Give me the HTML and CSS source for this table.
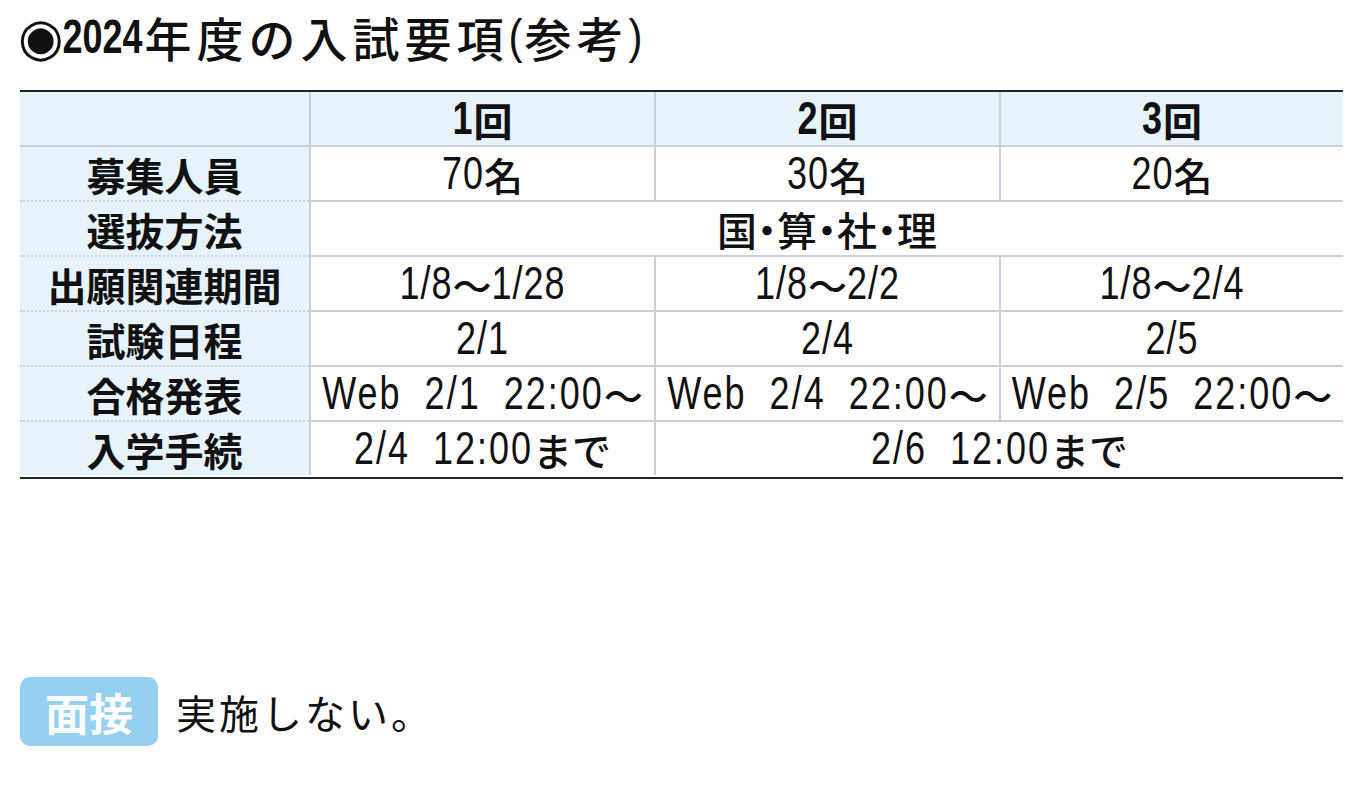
FILE: index.html
```html
<!DOCTYPE html>
<html lang="ja">
<head>
<meta charset="utf-8">
<title>2024年度の入試要項</title>
<link rel="stylesheet" href="styles.css">
</head>
<body>
<h1 class="title"><span class="mark">◉</span><span class="n">2024</span>年度の入試要項<span class="p">(</span>参考<span class="p">)</span></h1>

<div class="grid">
  <div class="cell lab head"></div>
  <div class="cell head dat"><span class="n">1</span><span class="j">回</span></div>
  <div class="cell head dat"><span class="n">2</span><span class="j">回</span></div>
  <div class="cell head dat"><span class="n">3</span><span class="j">回</span></div>

  <div class="cell lab">募集人員</div>
  <div class="cell dat"><span class="n">70</span><span class="j">名</span></div>
  <div class="cell dat"><span class="n">30</span><span class="j">名</span></div>
  <div class="cell dat"><span class="n">20</span><span class="j">名</span></div>

  <div class="cell lab">選抜方法</div>
  <div class="cell dat span3"><span class="subj">国・算・社・理</span></div>

  <div class="cell lab">出願関連期間</div>
  <div class="cell dat"><span class="n">1/8</span><span class="j">〜</span><span class="n">1/28</span></div>
  <div class="cell dat"><span class="n">1/8</span><span class="j">〜</span><span class="n">2/2</span></div>
  <div class="cell dat"><span class="n">1/8</span><span class="j">〜</span><span class="n">2/4</span></div>

  <div class="cell lab">試験日程</div>
  <div class="cell dat"><span class="n">2/1</span></div>
  <div class="cell dat"><span class="n">2/4</span></div>
  <div class="cell dat"><span class="n">2/5</span></div>

  <div class="cell lab">合格発表</div>
  <div class="cell dat"><span class="n w">Web 2/1 22:00</span><span class="j">〜</span></div>
  <div class="cell dat"><span class="n w">Web 2/4 22:00</span><span class="j">〜</span></div>
  <div class="cell dat"><span class="n w">Web 2/5 22:00</span><span class="j">〜</span></div>

  <div class="cell lab last">入学手続</div>
  <div class="cell dat last"><span class="n w">2/4 12:00</span><span class="j">まで</span></div>
  <div class="cell dat last span2"><span class="n w">2/6 12:00</span><span class="j">まで</span></div>
</div>

<div class="note">
  <span class="badge">面接</span>
  <span class="note-text">実施しない。</span>
</div>
</body>
</html>
```

FILE: styles.css
```css
html, body {
  margin: 0;
  padding: 0;
  background: #ffffff;
}

body {
  padding: 0 29px 0 20px;
  font-family: "Noto Sans CJK JP", "Liberation Sans", sans-serif;
  color: #111;
}

.title {
  margin: 0;
  padding-top: 0;
  height: 74px;
  box-sizing: border-box;
  display: flex;
  align-items: center;
  font-family: "Noto Sans CJK JP", sans-serif;
  font-size: 47px;
  font-weight: 500;
  line-height: 50px;
  letter-spacing: 5px;
  white-space: nowrap;
}

.title .mark {
  font-family: "DejaVu Sans", sans-serif;
  font-size: 52px;
  letter-spacing: 0;
  margin-left: -2px;
  margin-right: -1px;
}

.title .n {
  font-size: 36px;
  font-weight: 700;
  letter-spacing: 0;
  word-spacing: 0;
  transform: scaleY(1.32);
  margin-right: 2px;
}

.title .p {
  font-family: "Liberation Sans", sans-serif;
  font-weight: 400;
  font-size: 42px;
  letter-spacing: 2px;
  display: inline-block;
  transform: scaleY(1.15);
}

.grid {
  margin-top: 16px;
  width: 1323px;
  display: grid;
  grid-template-columns: 289px 345px 345px 344px;
  grid-auto-rows: 55px;
  border-top: 2px solid #1f2726;
  border-bottom: 2px solid #1f2726;
}

.cell {
  box-sizing: border-box;
  display: flex;
  align-items: center;
  justify-content: center;
  border-bottom: 2px solid #c9d0d8;
  white-space: nowrap;
}

.cell.last {
  border-bottom: none;
  height: 53px;
}

.lab {
  background: #e6f3fb;
  font-family: "Noto Sans CJK JP", sans-serif;
  font-size: 39px;
  font-weight: 700;
  border-bottom: 2px dotted #cdd2d8;
}

.head {
  background: #e6f3fb;
}

.lab.head {
  border-bottom: 2px solid #c9d0d8;
}

.dat {
  border-left: 2px solid #c9d0d8;
  font-family: "Noto Sans CJK JP", sans-serif;
  font-size: 40px;
}

.n {
  display: inline-block;
  font-family: "Liberation Sans", "Noto Sans CJK JP", sans-serif;
  font-size: 36px;
  font-weight: 400;
  line-height: 1;
  letter-spacing: 1px;
  transform: scaleY(1.28);
}

.head .n {
  font-weight: 700;
}

.n.w {
  word-spacing: 11px;
  letter-spacing: 2px;
}

.j {
  font-family: "Noto Sans CJK JP", sans-serif;
  font-size: 39px;
  font-weight: 500;
}

.head .j {
  font-weight: 700;
}

.span3 {
  grid-column: span 3;
}

.span2 {
  grid-column: span 2;
}

.subj {
  font-family: "Noto Sans CJK JP", sans-serif;
  font-size: 40px;
  font-weight: 500;
  font-feature-settings: "halt";
}

.note {
  margin-top: 198px;
  display: flex;
  align-items: center;
  gap: 18px;
}

.badge {
  width: 138px;
  height: 69px;
  border-radius: 10px;
  background: #95d0f0;
  color: #ffffff;
  display: flex;
  align-items: center;
  justify-content: center;
  font-size: 44px;
  font-weight: 700;
}

.note-text {
  font-size: 40px;
  font-weight: 400;
  letter-spacing: 3px;
}
```
